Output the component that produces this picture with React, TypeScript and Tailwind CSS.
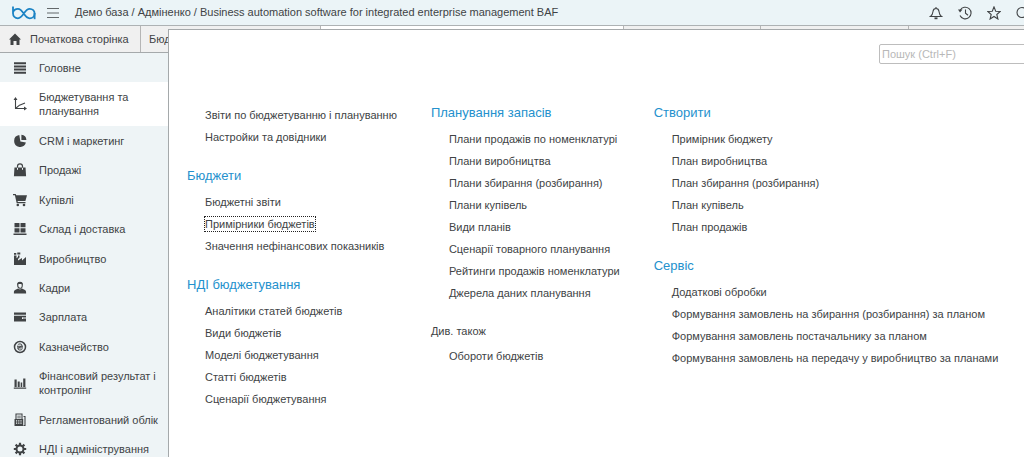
import { type ReactNode } from "react";
import clsx from "clsx";

type Section = { icon: ReactNode; label: string; active?: boolean };
type Group = { title?: string; plain?: boolean; items: string[] };

const SECTIONS: Section[] = [
  { label: "Головне", icon: <path d="M1 1.2h12v2H1zM1 4.4h12v2H1zM1 7.6h12v2H1zM1 10.8h12v2H1z" /> },
  {
    label: "Бюджетування та планування",
    active: true,
    icon: (
      <>
        <path d="M2.5 2v9.5H12M2.5 11.5l4-3.3L12 6" fill="none" stroke="currentColor" strokeWidth="1.1" />
        <path d="M2.5 0l2 3h-4zM14 11.5l-3 2v-4z" />
      </>
    ),
  },
  {
    label: "CRM і маркетинг",
    icon: <path d="M6.3 1a6 6 0 1 0 6.6 7.6L7.4 7.4zM8.4.8v5.1h5A5.4 5.4 0 0 0 8.4.8z" />,
  },
  {
    label: "Продажі",
    icon: (
      <>
        <path d="M1.5 4.5h11l.6 8.7H.9z" />
        <path d="M4.5 4.5V3.3a2.5 2.5 0 0 1 5 0v1.2" fill="none" stroke="currentColor" strokeWidth="1.2" />
        <path d="M4.5 5v1.8M9.5 5v1.8" stroke="#eef4f6" />
      </>
    ),
  },
  {
    label: "Купівлі",
    icon: (
      <>
        <path d="M0 1h2.7l.5 1.3H14L12.4 8H4.6l.2 1h7.7v1.3H3.7L1.9 2.2H0z" />
        <circle cx="4.8" cy="12" r="1.3" />
        <circle cx="11" cy="12" r="1.3" />
      </>
    ),
  },
  {
    label: "Склад і доставка",
    icon: <path d="M1.5 1h5v4.3h-5zM7.5 1h5v4.3h-5zM1.5 6.2h5v4.3h-5zM7.5 6.2h5v4.3h-5zM.5 11.5h13V13H.5z" />,
  },
  {
    label: "Виробництво",
    icon: <path d="M1 13V3.5h2.5v2.7L5 5V3.500h1.5v2L5 7v1.500l4-2.500v2.500l4-3.500V13zM1 1h2.300v1.700H1zM4.300.5h3v2h-3z" />,
  },
  {
    label: "Кадри",
    icon: (
      <>
        <path d="M4.7 4c0-3.5 4.6-3.5 4.6 0S7.9 7.2 7 7.2 4.7 6.5 4.7 4z" fill="none" stroke="currentColor" strokeWidth="1.1" />
        <path d="M4.2 4a2.8 3 0 0 1 5.6 0L8.5 3h-3zM5 7.5l2 1 2-1 2.5 1.2c1.2.6 1.6 1.3 1.6 2.8v1H.9v-1c0-1.5.4-2.2 1.6-2.8z" />
      </>
    ),
  },
  {
    label: "Зарплата",
    icon: <path d="M1 2.5h12v2.2H1zM1 5.700h12v1.500H9V9h4v2.500H1zM10 7.800h3v.8h-3z" />,
  },
  {
    label: "Казначейство",
    icon: (
      <>
        <circle cx="7" cy="7" r="5.5" fill="none" stroke="currentColor" strokeWidth="1.5" />
        <path
          d="M4.7 5c.6-1.500 4.200-1.500 4.300.2 0 1.600-4 2-4 3.600 0 1.700 3.500 1.600 4.300.2M4 6.300h6M4 7.900h6"
          fill="none"
          stroke="currentColor"
        />
      </>
    ),
  },
  {
    label: "Фінансовий результат і контролінг",
    icon: <path d="M1.5 3.5h2.2V11H1.5zM4.700 5.5h2V11h-2zM7.7 6.5h1.5V11H7.7zM10.2 2.5h2.2V11h-2.2zM.8 11.5h12.4v1.2H.8z" />,
  },
  {
    label: "Регламентований облік",
    icon: (
      <>
        <path d="M3 6V1h6v5M10.5 3.5H12v9h-1.5" fill="none" stroke="currentColor" strokeWidth="1.1" />
        <path d="M4.3 2.7h3.5v.9H4.3zM4.3 4.4h3.5v.9H4.3z" />
        <path
          fillRule="evenodd"
          d="M1.5 6h8.7v7H1.5zM3 7.2v1.2h1.2V7.2zM5.2 7.2v1.2h1.2V7.2zM7.4 7.2v1.2h1.2V7.2zM3 9.5v1.2h1.2V9.5zM5.2 9.5v1.2h1.2V9.5zM7.4 9.5v1.2h1.2V9.5z"
        />
      </>
    ),
  },
  {
    label: "НДІ і адміністрування",
    icon: (
      <>
        <circle cx="7" cy="7" r="3.5" fill="none" stroke="currentColor" strokeWidth="2" />
        <path
          d="M7 .8v2.4M7 10.8v2.4M.8 7h2.4M10.8 7h2.4M2.6 2.6l1.7 1.7M9.7 9.7l1.7 1.7M2.6 11.4l1.7-1.7M9.7 4.3l1.7-1.7"
          stroke="currentColor"
          strokeWidth="2.2"
        />
      </>
    ),
  },
];

const COLUMNS: Group[][] = [
  [
    { items: ["Звіти по бюджетуванню і плануванню", "Настройки та довідники"] },
    { title: "Бюджети", items: ["Бюджетні звіти", "Примірники бюджетів", "Значення нефінансових показників"] },
    {
      title: "НДІ бюджетування",
      items: ["Аналітики статей бюджетів", "Види бюджетів", "Моделі бюджетування", "Статті бюджетів", "Сценарії бюджетування"],
    },
  ],
  [
    {
      title: "Планування запасів",
      items: [
        "Плани продажів по номенклатурі",
        "Плани виробництва",
        "Плани збирання (розбирання)",
        "Плани купівель",
        "Види планів",
        "Сценарії товарного планування",
        "Рейтинги продажів номенклатури",
        "Джерела даних планування",
      ],
    },
    { title: "Див. також", plain: true, items: ["Обороти бюджетів"] },
  ],
  [
    {
      title: "Створити",
      items: ["Примірник бюджету", "План виробництва", "План збирання (розбирання)", "План купівель", "План продажів"],
    },
    {
      title: "Сервіс",
      items: [
        "Додаткові обробки",
        "Формування замовлень на збирання (розбирання) за планом",
        "Формування замовлень постачальнику за планом",
        "Формування замовлень на передачу у виробництво за планами",
      ],
    },
  ],
];

const FOCUSED_ITEM = "Примірники бюджетів";

function ToolButton({ label, children }: { label: string; children: ReactNode }) {
  return (
    <button type="button" aria-label={label} className="shrink-0">
      <svg viewBox="0 0 14 14" className="size-3.5" fill="none" stroke="currentColor" strokeWidth="1.1">
        {children}
      </svg>
    </button>
  );
}

function Header() {
  return (
    <header className="flex h-[26px] shrink-0 items-center border-b border-[#adb2b4] bg-[#ebf4f7] pl-3">
      <svg viewBox="0 0 24 14" className="h-3.5 w-6 shrink-0" fill="none" stroke="#1b83c4" strokeWidth="1.8">
        <path d="M1 .5v6.800c0 3 2.200 5 4.900 5C11.500 12.300 12 2.800 17.700 2.800c2.800 0 4.900 2.100 4.900 4.700s-2.100 4.800-4.900 4.800C12 12.300 11.500 2.800 5.900 2.800 3.600 2.800 1.700 4.200 1.200 6" />
        <path d="M22.600 7v6.200" />
      </svg>
      <button type="button" aria-label="Меню" className="ml-[11px]">
        <svg viewBox="0 0 12 10" className="h-2.5 w-3" stroke="#63686a">
          <path d="M0 .5h12M0 5h12M0 9.500h12" />
        </svg>
      </button>
      <h1 className="ml-4 grow whitespace-nowrap text-[11px]">Демо база / Адміненко / Business automation software for integrated enterprise management BAF</h1>
      <div className="-mr-1.5 flex gap-[15px]">
        <ToolButton label="Сповіщення">
          <path d="M1.5 10.5c2-1.2 2.2-2.5 2.5-5 .2-2 1.2-3 3-3s2.800 1 3 3c.3 2.500.5 3.800 2.500 5zM7 1v1.500" />
          <path d="M5.500 12.300h3" strokeWidth="1.8" />
        </ToolButton>
        <ToolButton label="Історія">
          <path d="M2.2 4.2a5.8 5.8 0 1 1-.2 5.3M7.5 3.5v3.8l2.5 2" />
          <path d="M0 3.5h4.5L2 6.500z" fill="currentColor" stroke="none" />
        </ToolButton>
        <ToolButton label="Обране">
          <path d="m7 .9 1.7 4.3 4.6.3-3.5 3 1.1 4.5L7 10.5 3.1 13l1.100-4.500-3.500-3 4.600-.3z" />
        </ToolButton>
        <ToolButton label="Пошук">
          <circle cx="6" cy="6.5" r="5" />
          <path d="m10 10 3.5 3.5" />
        </ToolButton>
      </div>
    </header>
  );
}

function Tabs() {
  return (
    <div className="flex h-[27px] shrink-0 border-b border-[#a5a9ab] bg-[#f0f0f0]">
      <button type="button" className="flex w-[141px] shrink-0 items-center border-r border-[#b5b5b5] pl-2 text-[11px]">
        <svg viewBox="0 0 14 12" className="mr-2 h-3 w-3.5" fill="#404345">
          <path d="M7 .5l6 6h-1.500V12h-3V8h-3v4h-3V6.500H1z" />
        </svg>
        Початкова сторінка
      </button>
      <button type="button" className="w-[180px] shrink-0 border-r border-[#b5b5b5] pl-2 text-left text-[11px]">
        Бюджетування
      </button>
      <div className="w-[303px] shrink-0 border-r border-[#b5b5b5] bg-white" />
      <div className="w-[137px] shrink-0 border-r border-[#b5b5b5]" />
      <div className="w-[148px] shrink-0 border-r border-[#b5b5b5]" />
    </div>
  );
}

function Sidebar() {
  return (
    <nav className="flex min-h-[411px] w-[168px] flex-col bg-[#eef4f6]">
      {SECTIONS.map(({ label, icon, active }) => (
        <a key={label} href="#" className={clsx("flex grow items-center py-[7px] pl-[13px] text-[11px] leading-[14px]", active && "bg-white")}>
          <svg viewBox="0 0 14 14" className="mr-3 size-3.5 shrink-0" fill="currentColor">
            {icon}
          </svg>
          <span>{label}</span>
        </a>
      ))}
    </nav>
  );
}

function MenuGroup({ title, plain, items }: Group) {
  return (
    <section>
      {title && (
        <h2 className={clsx("mb-1", plain ? "text-[11px] leading-5" : "text-[13px] leading-[22px] text-[#2491cd]")}>{title}</h2>
      )}
      <ul className={clsx("pl-[18px]", !title && "pt-0.5")}>
        {items.map((item) => (
          <li key={item} className="flex h-[22px] items-center">
            <a href="#" className={clsx("text-[11px] leading-[14px]", item === FOCUSED_ITEM && "outline-1 outline-dotted outline-[#222]")}>
              {item}
            </a>
          </li>
        ))}
      </ul>
    </section>
  );
}

function SectionMenu() {
  return (
    <div className="absolute top-[29px] right-0 bottom-0 left-[168px] overflow-hidden border-t border-l border-[#a5a9ab] bg-white">
      <div className="-mr-4 flex justify-end pt-3.5">
        <input
          type="search"
          aria-label="Пошук"
          placeholder="Пошук (Ctrl+F)"
          className="h-5 w-[161px] rounded-xs border border-[#bdbdbd] px-0.5 text-[11px] placeholder:text-[#b8b8b8]"
        />
      </div>
      <div className="flex gap-[34px] pt-[38px] pl-[18px] whitespace-nowrap">
        {COLUMNS.map((groups, i) => (
          <div key={i} className="flex flex-col gap-[17px]">
            {groups.map((group) => (
              <MenuGroup key={group.items[0]} {...group} />
            ))}
          </div>
        ))}
      </div>
    </div>
  );
}

export default function App() {
  return (
    <div className="relative flex h-screen flex-col overflow-hidden bg-white font-['Liberation_Sans',Arial,sans-serif] text-[#404345]">
      <Header />
      <Tabs />
      <Sidebar />
      <SectionMenu />
    </div>
  );
}
